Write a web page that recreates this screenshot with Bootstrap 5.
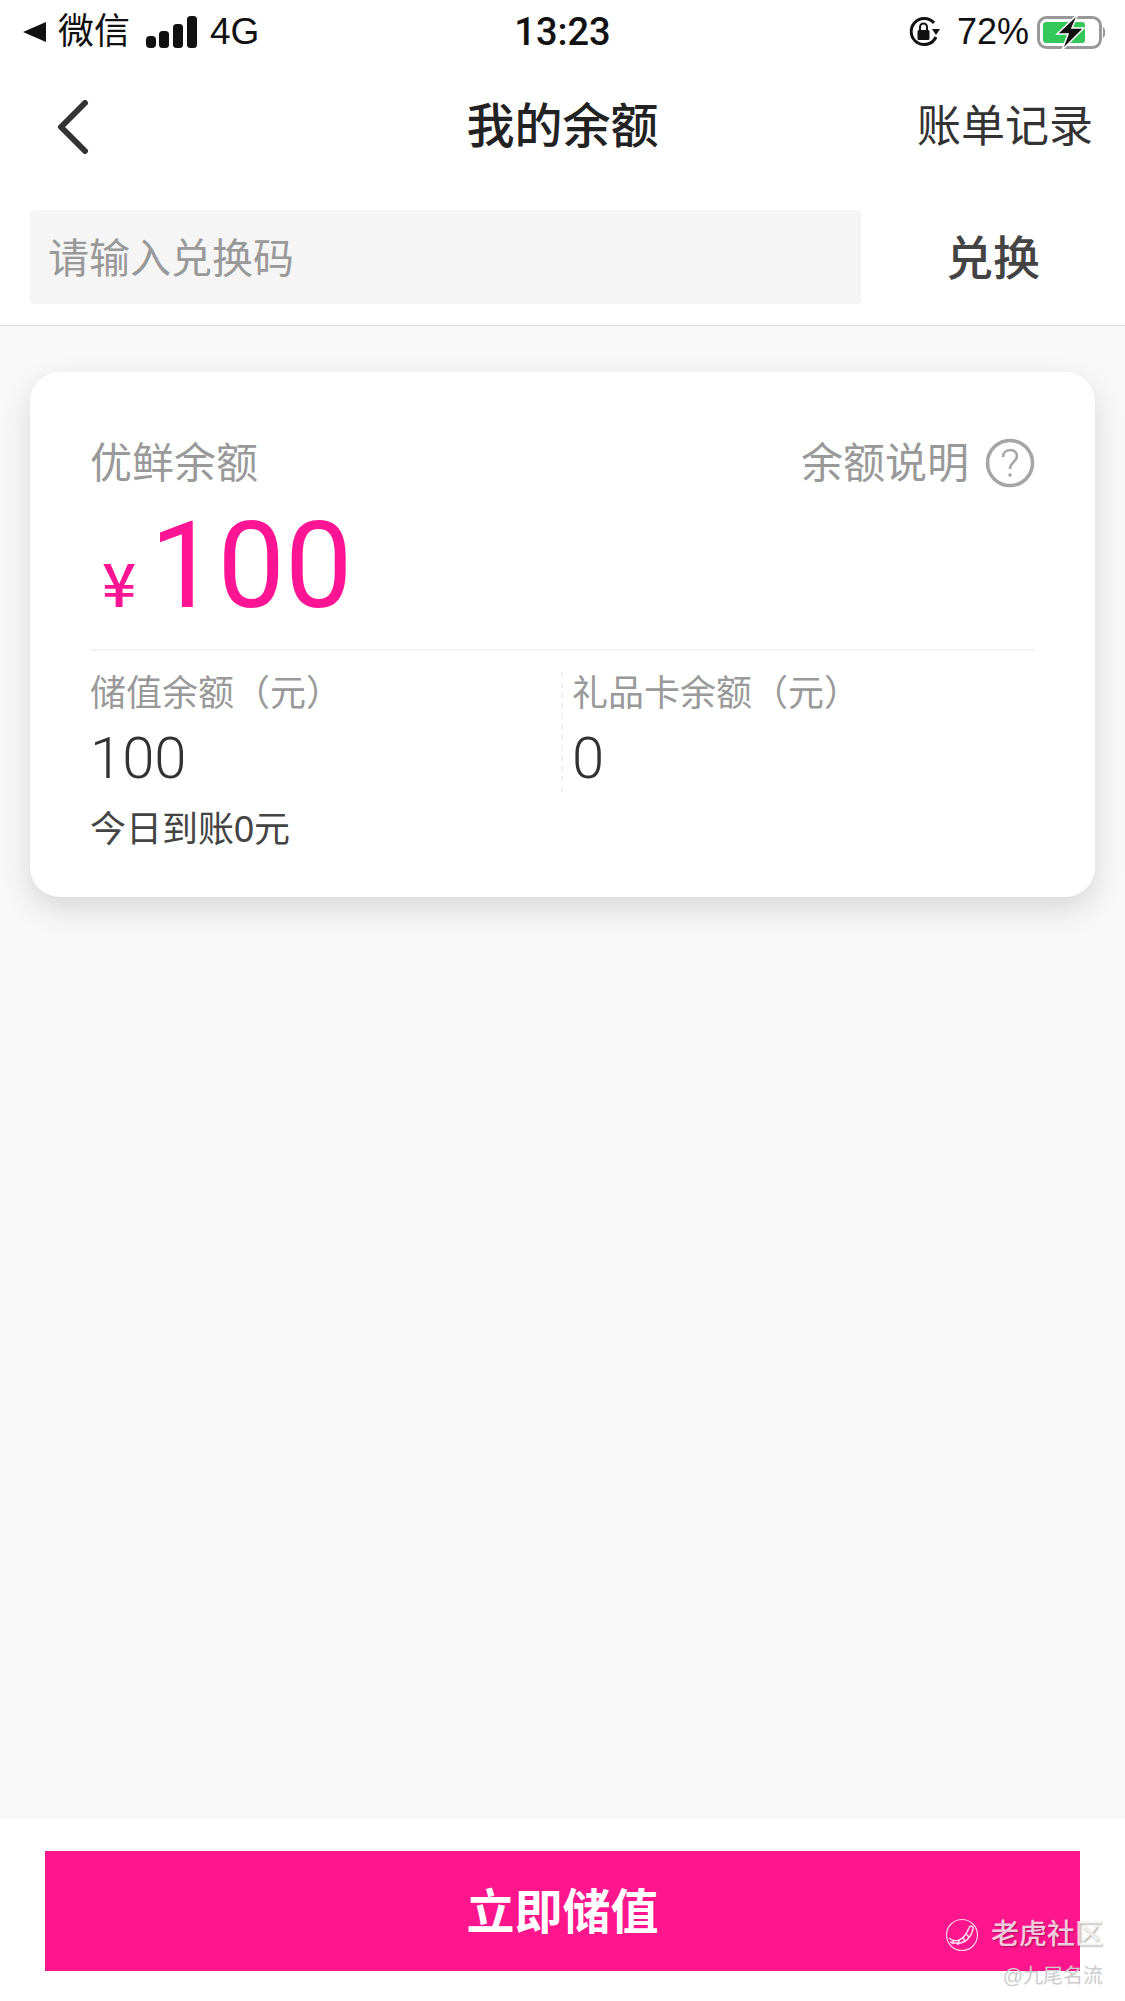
<!DOCTYPE html>
<html lang="zh">

<head>
  <meta charset="utf-8">
  <meta name="viewport" content="width=device-width">
  <title>我的余额</title>
  <link href="https://cdn.jsdelivr.net/npm/bootstrap@5.3.2/dist/css/bootstrap.min.css" rel="stylesheet">
  <script src="https://cdn.jsdelivr.net/npm/bootstrap@5.3.2/dist/js/bootstrap.bundle.min.js"></script>
  <style>
    body {
      font-family: "Liberation Sans", "Noto Sans CJK SC", sans-serif;
      background: #f8f8f8;
      color: #444;
    }

    .page-wrap {
      height: 2001px;
      overflow: hidden;
    }

    .status-bar {
      height: 64px;
      padding: 0 18px 0 23px;
      font-size: 36px;
      color: #111;
    }

    .status-left,
    .status-right {
      width: 400px;
    }

    .status-chat {
      margin-left: 12px;
    }

    .status-net {
      margin-left: 12px;
      font-size: 37px;
    }

    .status-time {
      font-family: Roboto, sans-serif;
      font-size: 38px;
      font-weight: 500;
      margin-right: 5px;
    }

    .nav-bar {
      height: 126px;
      padding: 0 32px;
    }

    .nav-side {
      width: 260px;
    }

    .nav-back {
      margin-left: 25px;
    }

    .nav-title {
      font-size: 48px;
      font-weight: 500;
      color: #222;
    }

    .nav-link-text {
      font-size: 44px;
      color: #333;
    }

    .code-bar {
      height: 136px;
      padding: 20px 0 22px 30px;
      border-bottom: 1px solid #dcdcdc;
    }

    .code-input.form-control {
      width: 831px;
      height: 94px;
      padding: 6px 18px 0;
      font-size: 41px;
      background: #f5f5f5;
      border: 0;
      border-radius: 4px;
    }

    .code-input::placeholder {
      color: #999;
    }

    .code-btn {
      font-size: 47px;
      font-weight: 500;
      color: #444;
      padding-top: 6px;
    }

    .balance-box {
      margin: 46px 30px 0;
      height: 525px;
      padding: 51px 60px 0;
      border-radius: 30px;
      box-shadow: 0 12px 30px rgba(0, 0, 0, .13);
    }

    .balance-head {
      height: 80px;
      font-size: 42px;
      color: #999;
    }

    .balance-sum {
      height: 148px;
      padding-bottom: 21px;
      color: #ff1493;
      line-height: 1;
      border-bottom: 2px solid #f3f3f3;
    }

    .yen-mark {
      font-family: "Noto Sans CJK SC", sans-serif;
      font-size: 60px;
      font-weight: 500;
      width: 60px;
      margin-top: 30px;
      padding-left: 12px;
    }

    .sum-value {
      font-family: Roboto, sans-serif;
      font-size: 120px;
    }

    .sub-label {
      font-size: 36px;
      color: #999;
      line-height: 1.2;
    }

    .sub-value {
      font-family: Roboto, sans-serif;
      font-size: 58px;
      font-weight: 300;
      line-height: 1;
      color: #333;
      margin-top: 14px;
    }

    .sub-note {
      font-size: 36px;
      color: #444;
      margin-top: 21px;
      line-height: 1.2;
    }

    .sub-col {
      padding-top: 21px;
      width: 471px;
    }

    .sub-col-right {
      padding-top: 0;
      margin-top: 21px;
      height: 120px;
      padding-left: 9px;
      border-left: 2px dashed #f0f0f0;
    }

    .foot-bar {
      height: 182px;
      padding: 32px 45px 30px;
    }

    .pay-btn.btn {
      height: 120px;
      padding-top: 10px;
      font-size: 48px;
      font-weight: 700;
      color: #fff;
      background: #ff168c;
      border: 0;
    }

    .mark-box {
      right: 22px;
      bottom: 13px;
      color: rgba(255, 255, 255, .8);
      text-shadow: 1px 1px 2px rgba(0, 0, 0, .35);
    }

    .mark-top {
      font-size: 28px;
      font-weight: 500;
      line-height: 1.2;
    }

    .mark-sub {
      font-size: 20px;
      line-height: 1.2;
      margin-top: 12px;
      color: #ccc;
      text-shadow: none;
    }
  </style>
</head>

<body>
  <div class="page-wrap d-flex flex-column position-relative">
    <header class="bg-white">
      <div class="status-bar d-flex align-items-center justify-content-between">
        <div class="status-left d-flex align-items-center">
          <svg width="23" height="20" viewBox="0 0 23 20">
            <path d="M0 10 23 0V20Z" fill="#111" />
          </svg>
          <span class="status-chat">微信</span>
          <svg class="ms-3" width="52" height="32" viewBox="0 0 52 32" fill="#111">
            <rect x="0" y="20" width="10" height="12" rx="4" />
            <rect x="13" y="15" width="10" height="17" rx="3.500" />
            <rect x="27" y="8" width="10" height="24" rx="3.500" />
            <rect x="41" y="0" width="10" height="32" rx="3.500" />
          </svg>
          <span class="status-net">4G</span>
        </div>
        <div class="status-time">13:23</div>
        <div class="status-right d-flex align-items-center justify-content-end">
          <svg width="33" height="32" viewBox="0 0 33 32">
            <path d="M28 21A13 13 0 1 1 26 7" fill="none" stroke="#111" stroke-width="3" />
            <path d="M24 13h8l-4 6Z" fill="#111" />
            <rect x="9.500" y="14" width="12" height="10" rx="1.500" fill="#111" />
            <path d="M12 14v-3a3.500 3.500 0 0 1 7 0v3" fill="none" stroke="#111" stroke-width="2" />
          </svg>
          <span class="ms-3">72%</span>
          <svg class="ms-2" width="70" height="36" viewBox="0 0 70 36">
            <rect x="1.500" y="3.500" width="62" height="30" rx="8" fill="none" stroke="#999" stroke-width="3" />
            <rect x="6" y="8" width="42" height="21" rx="3" fill="#34c759" />
            <path d="M66 13c3 1 3 10 0 11Z" fill="#999" />
            <path d="M41 0 20 20h11l-6 16 22-22H35Z" fill="#111" stroke="#fff" stroke-width="1.500" />
          </svg>
        </div>
      </div>

      <nav class="nav-bar d-flex align-items-center justify-content-between">
        <div class="nav-side">
          <svg class="d-block nav-back" width="32" height="54" viewBox="0 0 32 54">
            <path d="M28 3 4 27l24 24" fill="none" stroke="#333" stroke-width="6" stroke-linecap="round" stroke-linejoin="round" />
          </svg>
        </div>
        <div class="nav-title">我的余额</div>
        <div class="nav-side nav-link-text text-end">账单记录</div>
      </nav>

      <div class="code-bar d-flex align-items-center">
        <input type="text" class="form-control code-input" placeholder="请输入兑换码">
        <div class="code-btn flex-grow-1 text-center">兑换</div>
      </div>
    </header>

    <main class="flex-grow-1">
      <section class="balance-box bg-white">
        <div class="d-flex justify-content-between align-items-center balance-head">
          <span>优鲜余额</span>
          <span class="d-flex align-items-center gap-3">
            余额说明
            <svg width="50" height="50" viewBox="0 0 50 50">
              <circle cx="25" cy="25" r="22.500" fill="none" stroke="#a5a5a5" stroke-width="3.500" />
              <path d="M18 19c0-9 14-9 14-1 0 6-7 6-7 13" fill="none" stroke="#a5a5a5" stroke-width="2.500" />
              <circle cx="25" cy="37" r="1.800" fill="#a5a5a5" />
            </svg>
          </span>
        </div>
        <div class="balance-sum d-flex align-items-center">
          <span class="yen-mark">¥</span>
          <span class="sum-value">100</span>
        </div>
        <div class="d-flex">
          <div class="sub-col">
            <div class="sub-label">储值余额（元）</div>
            <div class="sub-value">100</div>
            <div class="sub-note">今日到账0元</div>
          </div>
          <div class="sub-col sub-col-right">
            <div class="sub-label">礼品卡余额（元）</div>
            <div class="sub-value">0</div>
          </div>
        </div>
      </section>
    </main>

    <footer class="foot-bar bg-white">
      <button type="button" class="btn pay-btn w-100 rounded-0">立即储值</button>
    </footer>

    <div class="mark-box position-absolute text-end">
      <div class="mark-top d-flex align-items-center justify-content-end gap-2">
        <svg width="34" height="34" viewBox="0 0 34 34" fill="none" stroke="currentColor">
          <circle cx="17" cy="17" r="15.500" stroke-width="1.200" />
          <path d="M4 20c7 6 15 2 20-10 1-3 5-2 4 1-3 12-12 17-23 13" stroke-width="1.600" />
          <path d="M9 22l-2 4M14 22l-1 5M18 19l2 5M21 16l3 3" stroke-width="1.600" />
        </svg>
        <span class="ms-1">老虎社区</span>
      </div>
      <div class="mark-sub">@九尾名流</div>
    </div>
  </div>
</body>

</html>
